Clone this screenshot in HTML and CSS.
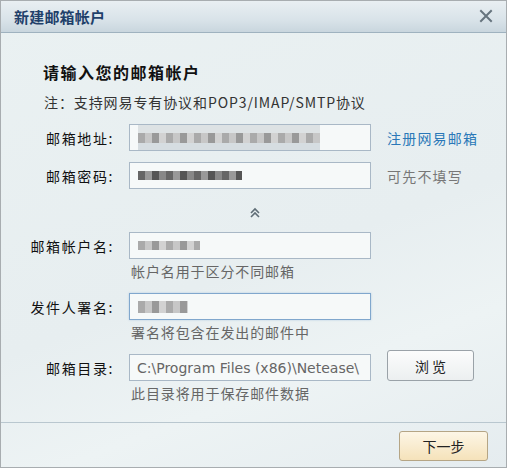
FILE: index.html
```html
<!DOCTYPE html>
<html lang="zh-CN">
<head>
    <meta charset="UTF-8">
    <title>新建邮箱帐户</title>
    <link rel="stylesheet" href="styles.css">
</head>
<body>
    <div class="dialog">
        <div class="titlebar">
            <span class="title">新建邮箱帐户</span>
            <svg class="close" width="14" height="14" viewBox="0 0 14 14">
                <path d="M2 2 L12 12 M12 2 L2 12" stroke="#66747e" stroke-width="2" stroke-linecap="square"/>
            </svg>
        </div>
        <div class="content">
            <h2 class="heading">请输入您的邮箱帐户</h2>
            <p class="note">注：支持网易专有协议和POP3/IMAP/SMTP协议</p>

            <div class="row first">
                <label class="label">邮箱地址:</label>
                <div class="field"><span class="mask mask-mail"></span></div>
                <a class="side link">注册网易邮箱</a>
            </div>
            <div class="row">
                <label class="label">邮箱密码:</label>
                <div class="field"><span class="mask mask-pass"></span></div>
                <span class="side muted">可先不填写</span>
            </div>

            <div class="toggle">
                <svg width="12" height="12" viewBox="0 0 12 12">
                    <path d="M2 6 L6 2 L10 6 M2 10 L6 6 L10 10" fill="none" stroke="#5f6d76" stroke-width="1.6"/>
                </svg>
            </div>

            <div class="row">
                <label class="label">邮箱帐户名:</label>
                <div class="field"><span class="mask mask-name"></span></div>
                <span></span>
                <span></span>
                <p class="hint">帐户名用于区分不同邮箱</p>
            </div>
            <div class="row spaced">
                <label class="label">发件人署名:</label>
                <div class="field focused"><span class="mask mask-sign"></span></div>
                <span></span>
                <span></span>
                <p class="hint">署名将包含在发出的邮件中</p>
            </div>
            <div class="row spaced">
                <label class="label">邮箱目录:</label>
                <div class="field path">C:\Program Files (x86)\Netease\</div>
                <button class="btn browse">浏 览</button>
                <span></span>
                <p class="hint">此目录将用于保存邮件数据</p>
            </div>
        </div>
        <div class="footer">
            <button class="btn next">下一步</button>
        </div>
    </div>
</body>
</html>
```

FILE: styles.css
```css
html, body {
    margin: 0;
    padding: 0;
}
body {
    width: 507px;
    height: 468px;
    font-family: "Noto Sans CJK SC", "DejaVu Sans", sans-serif;
    font-size: 14px;
    color: #222;
}
.dialog {
    box-sizing: border-box;
    width: 507px;
    height: 468px;
    border: 1px solid #a8adb0;
    background: linear-gradient(160deg, #eaf1f2 0%, #e7eef0 55%, #edf3f4 75%, #e5ecef 100%);
    display: flex;
    flex-direction: column;
}
.titlebar {
    height: 31px;
    border-bottom: 1px solid #9fb2bf;
    background: linear-gradient(#e9eff2, #d9e3e9 60%, #c9d6de);
    display: flex;
    align-items: center;
    justify-content: space-between;
    padding: 0 13px 0 13px;
}
.title {
    font-size: 15px;
    font-weight: bold;
    color: #1f406a;
    letter-spacing: 0.2px;
}
.close {
    margin-top: -2px;
}
.content {
    flex: 1;
    padding: 0 0 0 28px;
}
.heading {
    margin: 28px 0 0 14px;
    font-size: 16px;
    line-height: 22px;
    font-weight: bold;
    color: #111;
    letter-spacing: 1.5px;
}
.note {
    margin: 9px 0 0 15px;
    font-size: 14px;
    line-height: 20px;
    color: #333;
    letter-spacing: 0.9px;
}
.row {
    display: grid;
    grid-template-columns: 86px 242px auto;
    column-gap: 14px;
    align-items: center;
    margin-top: 11px;
}
.row.first {
    margin-top: 12px;
}
.row.spaced {
    margin-top: 13px;
}
.label {
    text-align: right;
    font-size: 14px;
    color: #111;
    letter-spacing: 1.6px;
    padding-right: 1px;
}
.field {
    box-sizing: border-box;
    height: 27px;
    border: 1px solid #a9b8c6;
    background: #f6f9f9;
    display: flex;
    align-items: center;
    padding-left: 8px;
    overflow: hidden;
}
.field.focused {
    border-color: #80a7cd;
    box-shadow: 0 0 2px #b5cde3;
}
.field.path {
    color: #666;
    white-space: nowrap;
    padding-left: 7px;
    font-family: "DejaVu Sans", sans-serif;
    font-size: 14px;
}
.mask {
    display: inline-block;
    height: 9px;
    background: repeating-linear-gradient(90deg, #aaa 0 7px, #c7c7c7 7px 14px, #999 14px 21px, #d2d2d2 21px 28px);
}
.mask-mail {
    width: 182px;
    height: 10px;
    box-shadow: 0 -9px 0 #dde2e4, 0 9px 0 #d6dde1;
}
.mask-pass {
    width: 104px;
    background: repeating-linear-gradient(90deg, #666 0 7px, #999 7px 14px, #555 14px 21px, #888 21px 28px);
}
.mask-name {
    width: 62px;
}
.mask-sign {
    width: 50px;
    height: 12px;
}
.side {
    font-size: 14px;
    padding-left: 2px;
    letter-spacing: 1.2px;
}
.link {
    color: #2a78b8;
}
.muted {
    color: #777;
}
.hint {
    grid-column: 2 / 4;
    margin: 3px 0 0 2px;
    font-size: 14px;
    line-height: 18px;
    color: #666;
    letter-spacing: 0.9px;
}
.toggle {
    display: flex;
    justify-content: center;
    width: 470px;
    margin: 18px 0 0 0;
    padding-right: 28px;
    box-sizing: border-box;
    height: 14px;
}
.toggle svg {
    margin-left: 10px;
}
.btn {
    font-family: "Noto Sans CJK SC", sans-serif;
    font-size: 14px;
    color: #222;
    border-radius: 3px;
    cursor: pointer;
}
.browse {
    align-self: start;
    width: 87px;
    height: 31px;
    margin: -4px 0 0 2px;
    border: 1px solid #9aa2a8;
    background: linear-gradient(#fbfcfc, #eceff0);
}
.footer {
    height: 44px;
    border-top: 1px solid #b9c7cf;
    display: flex;
    justify-content: flex-end;
    align-items: flex-start;
    padding-right: 18px;
}
.next {
    margin-top: 8px;
    width: 89px;
    height: 30px;
    border: 1px solid #b5a585;
    background: linear-gradient(#fdf6e6, #f5e2ba);
}
```
